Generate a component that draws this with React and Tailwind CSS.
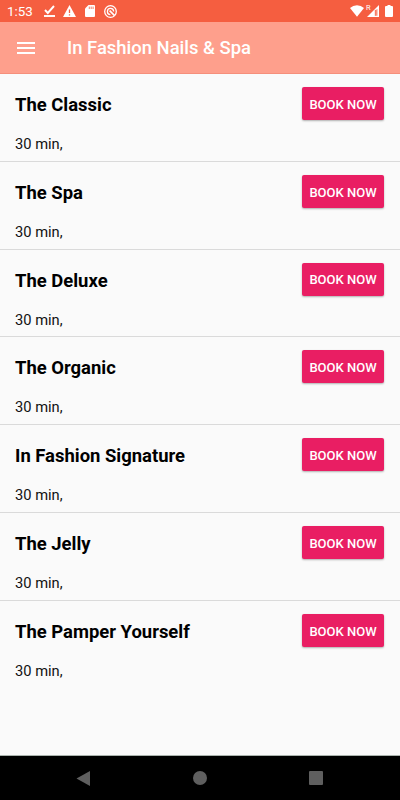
const services = [
  'The Classic',
  'The Spa',
  'The Deluxe',
  'The Organic',
  'In Fashion Signature',
  'The Jelly',
  'The Pamper Yourself',
];

const StatusBar = () => (
  <div className="h-[22px] flex-shrink-0 bg-[#f55e40] text-white flex items-center justify-between pl-[7px] pr-[7px]">
    <div className="flex items-center">
      <span className="w-[37px] text-[13.4px] leading-[22px] pt-px whitespace-nowrap">1:53</span>

      {/* DOWNLOAD DONE */}
      <svg className="w-[11px] h-[12px]" viewBox="0 0 11 12" fill="none" stroke="currentColor">
        <path d="M1 5l2.8 3L10 1" strokeWidth="1.9" />
        <path d="M0 11h11" strokeWidth="1.9" />
      </svg>

      {/* WARNING */}
      <svg className="w-[13px] h-[12px] ml-[8px]" viewBox="0 0 13 12">
        <path d="M6.5 0L13 12H0z" fill="currentColor" />
        <path d="M6.5 4.5v3.5M6.5 9.2v1.4" stroke="#f55e40" strokeWidth="1.3" />
      </svg>

      {/* SD CARD */}
      <svg className="w-[10px] h-[12px] ml-[9px]" viewBox="0 0 10 12">
        <path d="M3.5 0H9q1 0 1 1v10q0 1-1 1H1q-1 0-1-1V3.5z" fill="currentColor" />
        <path d="M4.3 1.6v2.4M6.2 1.6v2.4M8.1 1.6v2.4" stroke="#f55e40" strokeWidth=".8" />
      </svg>

      {/* SYNC */}
      <svg className="w-[13px] h-[13px] ml-[9px]" viewBox="0 0 13 13" fill="none" stroke="currentColor">
        <circle cx="6.5" cy="6.5" r="5.8" strokeWidth="1.3" />
        <path d="M6.4 9.6A3.1 3.1 0 1 1 9.6 6.6" strokeWidth="1.3" />
        <path d="M5.6 5.6l4.8 4.8" strokeWidth="1.6" />
      </svg>
    </div>

    <div className="flex items-center">
      <svg className="w-[14px] h-[12px]" viewBox="0 0 14 12" fill="currentColor">
        <path d="M7 11.7L0 3Q3 .3 7 .3T14 3z" />
      </svg>
      <div className="relative ml-[3px]">
        <svg className="w-[12px] h-[12px]" viewBox="0 0 12 12">
          <path d="M12 0v12H0z" fill="currentColor" />
          <path d="M8.3 5v5.8h2.2V4z" fill="#f9937e" />
          <path d="M8.3 5v5.8" stroke="#f55e40" strokeWidth=".8" />
        </svg>
        <span className="absolute -left-[1px] -top-[1px] text-[7.5px] leading-[8px]">R</span>
      </div>
      <svg className="w-[8px] h-[12px] ml-[6px]" viewBox="0 0 8 12" fill="currentColor">
        <path d="M2.5 0h3v1H7q1 0 1 1v9q0 1-1 1H1q-1 0-1-1V2q0-1 1-1h1.5z" />
      </svg>
    </div>
  </div>
);

const ServiceRow = ({ name, last }) => (
  <div className={`h-[87.8px] px-[15px] border-b ${last ? 'border-transparent' : 'border-[#dadada]'}`}>
    <div className="flex items-start justify-between pt-[13px]">
      <h2 className="text-[18.45px] leading-[36px] font-bold text-black">{name}</h2>
      <button
        type="button"
        className="w-[82px] h-[33px] mr-[1px] pt-[2px] rounded-[2px] bg-[#e91e63] text-white text-[13px] font-medium whitespace-nowrap shadow-[0_1px_2px_rgba(0,0,0,0.3)]"
      >
        BOOK NOW
      </button>
    </div>
    <p className="mt-[11px] text-[14.7px] leading-[20px] text-[#111]">30 min,</p>
  </div>
);

const App = () => {
  return (
    <div className="w-[400px] h-[800px] overflow-hidden flex flex-col bg-[#fafafa] font-['Roboto',sans-serif]">
      <StatusBar />

      {/* HEADER */}
      <div className="h-[52px] flex-shrink-0 flex items-center bg-[#fe9f8c] border-b border-[#f58f7b] pl-[17px] text-white">
        <button type="button" aria-label="Menu">
          <svg className="w-[18px] h-[12px]" viewBox="0 0 18 12" fill="currentColor">
            <path d="M0 0h18v2H0zM0 5h18v2H0zM0 10h18v2H0z" />
          </svg>
        </button>
        <h1 className="ml-[32px] pt-[2px] text-[18.45px] font-medium">In Fashion Nails & Spa</h1>
      </div>

      {/* SERVICES */}
      <div className="flex-1 min-h-0 overflow-hidden">
        {services.map((name, i) => (
          <ServiceRow key={name} name={name} last={i === services.length - 1} />
        ))}
      </div>

      {/* NAVIGATION BAR */}
      <div className="h-[45px] flex-shrink-0 bg-black border-t border-[#aab3ad] flex items-center justify-between pl-[76px] pr-[77px] text-[#5f5f5f]">
        <svg className="w-[14px] h-[15px]" viewBox="0 0 14 15" fill="currentColor">
          <path d="M14 0v15L.5 7.5z" />
        </svg>
        <div className="w-[14px] h-[14px] rounded-full bg-[#5f5f5f]" />
        <div className="w-[14px] h-[14px] rounded-[1px] bg-[#5f5f5f]" />
      </div>
    </div>
  );
};

export default App;
